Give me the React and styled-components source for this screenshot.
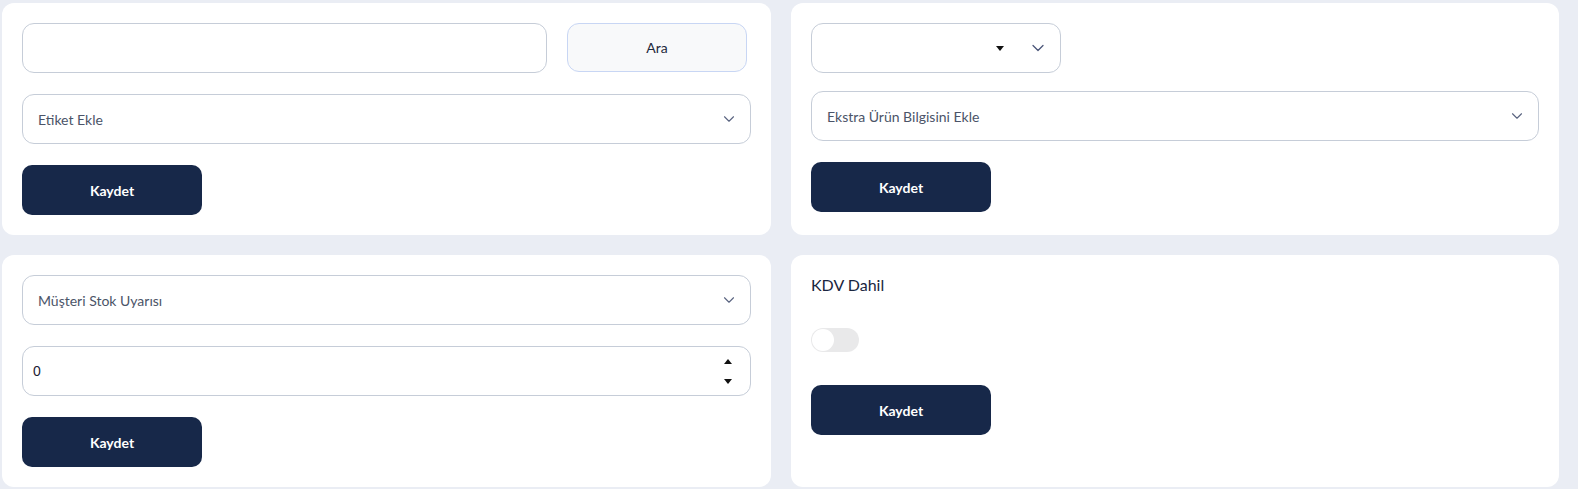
import * as React from "react";
import styled, { createGlobalStyle } from "styled-components";
import { ChevronDown } from "lucide-react";

const GlobalStyle = createGlobalStyle`
  * {
    box-sizing: border-box;
  }
  body {
    margin: 0;
    background-color: #eaedf4;
    font-family: "Lato", "Open Sans", sans-serif;
  }
`;

const Page = styled.div`
  display: grid;
  grid-template-columns: 769px 768px;
  column-gap: 20px;
  row-gap: 20px;
  padding: 3px 19px 2px 2px;
`;

const Card = styled.div`
  background-color: #ffffff;
  border-radius: 12px;
  padding: 20px;
  display: flex;
  flex-direction: column;
`;

const Row = styled.div`
  display: flex;
  flex-direction: row;
  gap: 20px;
  padding-right: ${(p) => p.$padRight || 0}px;
  margin-bottom: ${(p) => (p.$gap === undefined ? 21 : p.$gap)}px;
`;

const TextInput = styled.input`
  flex: 1;
  height: 50px;
  border: 1px solid #c6cdd8;
  border-radius: 12px;
  background: #ffffff;
  outline: none;
  padding: 0 15px;
  font-family: "Liberation Sans", Arial, sans-serif;
  font-size: 14px;
  color: #111111;
`;

const SearchButton = styled.button`
  width: 180px;
  height: 49px;
  border: 1px solid #c8d6f4;
  border-radius: 12px;
  background-color: #f8f9fa;
  font-family: "Lato", sans-serif;
  font-size: 14px;
  color: #1f2a3c;
  cursor: pointer;
`;

const SelectBox = styled.div`
  display: flex;
  align-items: center;
  justify-content: space-between;
  width: ${(p) => (p.$width ? `${p.$width}px` : "100%")};
  height: 50px;
  border: 1px solid #c6cdd8;
  border-radius: 12px;
  padding: 0 12px 0 15px;
  margin-bottom: ${(p) => (p.$gap === undefined ? 21 : p.$gap)}px;
  background: #ffffff;
  color: #5a6480;
`;

const SelectText = styled.span`
  font-size: 14px;
  color: #4b5468;
`;

const SmallIcons = styled.div`
  display: flex;
  align-items: center;
  gap: 24px;
  margin-left: auto;
  color: #4a5578;
`;

const NumberBox = styled.div`
  display: flex;
  align-items: center;
  height: 50px;
  border: 1px solid #c6cdd8;
  border-radius: 12px;
  padding: 0 18px 0 10px;
  margin-bottom: 21px;
`;

const NumberValue = styled.span`
  flex: 1;
  font-family: "Liberation Sans", Arial, sans-serif;
  font-size: 14px;
  color: #1b2233;
`;

const Spinner = styled.div`
  display: flex;
  flex-direction: column;
  gap: 15px;
`;

const SaveButton = styled.button`
  width: 180px;
  height: 50px;
  border: none;
  border-radius: 10px;
  background-color: #172849;
  color: #ffffff;
  font-family: "Lato", sans-serif;
  font-weight: 700;
  font-size: 14px;
  cursor: pointer;
`;

const Label = styled.div`
  font-size: 16px;
  line-height: 20px;
  color: #1a2640;
  margin-bottom: 33px;
`;

const Toggle = styled.div`
  width: 48px;
  height: 24px;
  border-radius: 12px;
  background-color: #e9e9ea;
  padding: 1px;
  margin-bottom: 33px;
`;

const Knob = styled.div`
  width: 22px;
  height: 22px;
  border-radius: 50%;
  background-color: #ffffff;
`;

const Triangle = ({ up }) => (
  <svg width="8" height="5" viewBox="0 0 8 5">
    <path d={up ? "M0 5 L4 0 L8 5 Z" : "M0 0 L8 0 L4 5 Z"} fill="#111111" />
  </svg>
);

export default function App() {
  return (
    <>
      <GlobalStyle />
      <Page>
        <Card>
          <Row $padRight={4}>
            <TextInput type="text" />
            <SearchButton>Ara</SearchButton>
          </Row>
          <SelectBox>
            <SelectText>Etiket Ekle</SelectText>
            <ChevronDown size={18} strokeWidth={1.5} />
          </SelectBox>
          <SaveButton>Kaydet</SaveButton>
        </Card>

        <Card>
          <SelectBox $width={250} $gap={18}>
            <SmallIcons>
              <Triangle />
              <ChevronDown size={20} strokeWidth={1.5} />
            </SmallIcons>
          </SelectBox>
          <SelectBox>
            <SelectText>Ekstra Ürün Bilgisini Ekle</SelectText>
            <ChevronDown size={18} strokeWidth={1.5} />
          </SelectBox>
          <SaveButton>Kaydet</SaveButton>
        </Card>

        <Card>
          <SelectBox>
            <SelectText>Müşteri Stok Uyarısı</SelectText>
            <ChevronDown size={18} strokeWidth={1.5} />
          </SelectBox>
          <NumberBox>
            <NumberValue>0</NumberValue>
            <Spinner>
              <Triangle up />
              <Triangle />
            </Spinner>
          </NumberBox>
          <SaveButton>Kaydet</SaveButton>
        </Card>

        <Card>
          <Label>KDV Dahil</Label>
          <Toggle>
            <Knob />
          </Toggle>
          <SaveButton>Kaydet</SaveButton>
        </Card>
      </Page>
    </>
  );
}
